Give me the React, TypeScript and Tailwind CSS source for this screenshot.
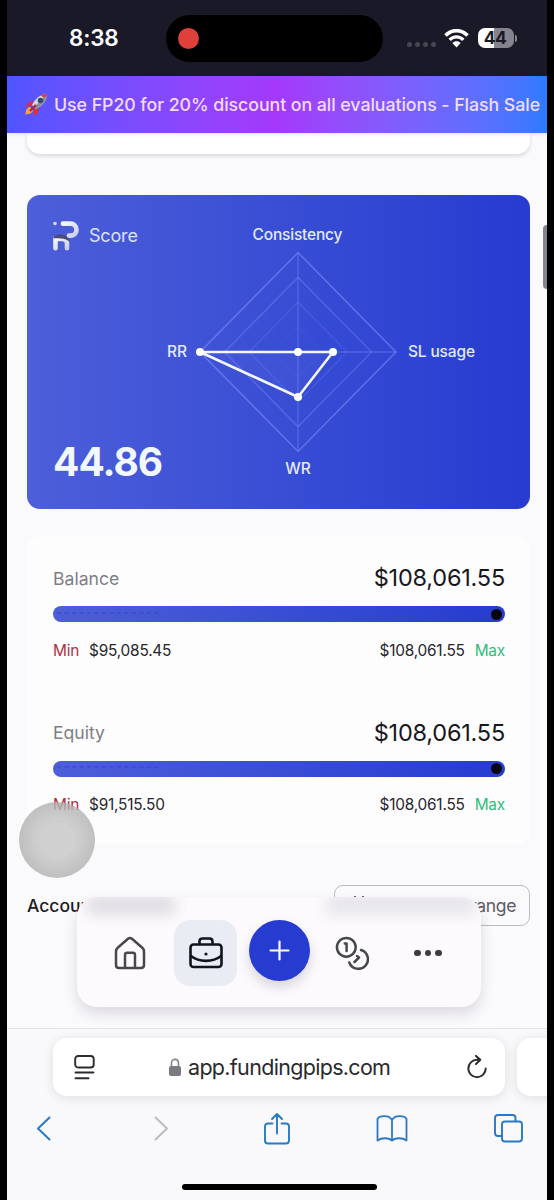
import React from 'react';

const ranges = [
  { label: 'Balance', value: '$108,061.55', min: '$95,085.45', max: '$108,061.55' },
  { label: 'Equity', value: '$108,061.55', min: '$91,515.50', max: '$108,061.55' },
];

const StatusBar = () => (
  <div className="flex h-[76px] shrink-0 items-center bg-[#1a1928]">
    <div className="w-[159px] pl-[62px] text-[22.500px] leading-none font-semibold tracking-[-0.01em] text-white">8:38</div>
    <div className="flex h-[47px] w-[217px] items-center rounded-full bg-black pl-[12px]">
      <div className="size-[21px] rounded-full bg-[#e0403a]" />
    </div>
    <div className="ml-[24px] flex gap-[3px] pt-[12px]">
      {[0, 1, 2, 3].map((i) => (
        <span key={i} className="size-[5px] rounded-full bg-[#474653]" />
      ))}
    </div>
    <svg className="ml-[8px]" width="25" height="19" viewBox="0 0 25 19" fill="none">
      <path d="M1.500 6.600C8-.1 17-.1 23.500 6.600" stroke="#fff" strokeWidth="3.600" />
      <path d="M5.700 10.900c3.800-4 9.800-4 13.600 0" stroke="#fff" strokeWidth="3.400" />
      <path d="M12.500 18.400 8.300 14c2.500-2.300 5.900-2.300 8.400 0z" fill="#fff" />
    </svg>
    <div className="ml-[9px] flex h-[20px] w-[36px] items-center justify-center rounded-[7px] bg-linear-to-r from-white from-45% to-[#85848d] to-45% pr-[2px] text-[17.500px] leading-none font-bold tracking-[-0.03em] text-[#1a1928]">
      44
    </div>
    <div className="ml-px h-[7px] w-[2px] rounded-r-full bg-[#85848d]" />
  </div>
);

const Rocket = () => (
  <svg className="shrink-0" width="23" height="23" viewBox="0 0 23 23">
    <path d="M9 8 4 9 0 14l6-1zM14 15l-1 5-5 3 1-7z" fill="#d8313c" />
    <path d="M5 14c-3 0-4.500 4-4.500 7.500C4 21 8 20 8 17z" fill="#f5a63b" />
    <path d="M22 1c-7 0-12 5-15 11l4 4c6-3 11-8 11-15z" fill="#d4d8de" />
    <path d="M22 1c-2 0-4 .4-6 1.300l4.600 4.600C21.700 5 22 3 22 1z" fill="#d33b46" />
    <path d="M11 16c6-3 11-8 11-14L9 14z" fill="#8b929e" />
    <circle cx="15.500" cy="7.500" r="2.800" fill="#344a73" />
    <path d="M5 18l6-6" stroke="#b32632" strokeWidth="2.400" />
  </svg>
);

const Logo = () => (
  <svg width="28" height="31" viewBox="0 0 28 31" fill="none">
    <defs>
      <linearGradient id="logo" x1="0" y1="0" x2="1" y2="1">
        <stop offset="0" stopColor="#f4f7ff" />
        <stop offset="1" stopColor="#cbd0f0" />
      </linearGradient>
    </defs>
    <circle cx="3" cy="3.500" r="1.800" fill="#d5dcff" />
    <path d="M11 3.700h7.500a6 6 0 0 1 0 12h-1.500" stroke="url(#logo)" strokeWidth="4.800" strokeLinecap="round" />
    <path d="M3.500 28.200V19H10c3.500 0 5 1.500 5 4.500v4.700" stroke="url(#logo)" strokeWidth="4.600" strokeLinecap="round" />
    <path d="M1 18.500c1-4 8-5 12-3 3 1.500 4.500 4 4.700 7-2-3-5-4-8.700-4-3 0-5.500-.5-8 0z" fill="#4b4a78" />
  </svg>
);

const CX = 271;
const CY = 157;

const diamond = (r: number) =>
  `${CX},${CY - r * 1.015} ${CX + r},${CY} ${CX},${CY + r * 1.015} ${CX - r},${CY}`;

const RadarChart = () => (
  <svg className="col-start-1 row-start-1" width="503" height="313" viewBox="0 0 503 313" fill="none">
    {[98, 73.5, 49, 24.5].map((r, i) => (
      <polygon key={r} points={diamond(r)} stroke="#8b98ff" strokeOpacity={[0.5, 0.32, 0.18, 0.05][i]} strokeWidth="1.500" />
    ))}
    <path d={`M${CX} 58V256M173 ${CY}H369`} stroke="#8b98ff" strokeOpacity="0.35" strokeWidth="1.300" />
    <polygon points="173,157 306,157 271,202" fill="#fff" fillOpacity="0.03" stroke="#f2f7ff" strokeWidth="2.600" strokeLinejoin="round" />
    {[[173, 157], [271, 157], [306, 157], [271, 202]].map(([x, y]) => (
      <circle key={`${x}-${y}`} cx={x} cy={y} r="4" fill="#fff" />
    ))}
    <g fill="#e3e9ff" fontFamily="Inter, sans-serif" fontSize="15.500" fontWeight="500">
      <text x="270.500" y="44.500" textAnchor="middle" textLength="90">Consistency</text>
      <text x="381" y="162" textLength="67">SL usage</text>
      <text x="271" y="279" textAnchor="middle">WR</text>
      <text x="160" y="162" textAnchor="end">RR</text>
    </g>
  </svg>
);

const ScoreCard = () => (
  <div className="mt-[41px] grid h-[314px] overflow-hidden rounded-[13px] bg-linear-to-r from-[#4d5ed9] to-[#263bd0]">
    <div className="col-start-1 row-start-1 flex flex-col justify-between px-[25px] pt-[25px] pb-[25px]">
      <div className="flex items-center gap-[9px] text-[18px] tracking-[-0.01em] text-[#dce2ff]">
        <Logo />
        <span>Score</span>
      </div>
      <div className="pl-px text-[39px] leading-[44px] font-bold tracking-[-0.025em] text-[#f1f8ff]">44.86</div>
    </div>
    <RadarChart />
  </div>
);

const RangeRow = ({ label, value, min, max }: (typeof ranges)[number]) => (
  <div className="h-[154.500px]">
    <div className="flex h-[30px] items-center justify-between">
      <span className="pt-[2px] text-[17.600px] text-[#7d7d85]">{label}</span>
      <span className="text-[23.500px] tracking-[-0.009em] text-[#17171c]">{value}</span>
    </div>
    <div className="mt-[13px] flex h-[16px] items-center justify-between rounded-full bg-linear-to-r from-[#4d5ed9] to-[#263bd0] pr-[3px]">
      <svg className="mb-[3px] ml-[4px]" width="104" height="2" viewBox="0 0 104 2">
        <path d="M0 1h104" stroke="#3541a8" strokeOpacity="0.75" strokeWidth="1.200" strokeDasharray="4 3.500" />
      </svg>
      <div className="size-[11px] rounded-full bg-[#05050f]" />
    </div>
    <div className="mt-[17.500px] flex h-[22px] items-center justify-between text-[15.400px] tracking-[-0.014em] text-[#26262c]">
      <span className="flex gap-[10px]">
        <span className="text-[#b02f43]">Min</span>
        {min}
      </span>
      <span className="flex gap-[10px]">
        {max}
        <span className="text-[#2fbd78]">Max</span>
      </span>
    </div>
  </div>
);

const HomeIcon = () => (
  <svg width="32" height="34" viewBox="0 0 32 34" fill="none" stroke="#47474c" strokeWidth="2.500" strokeLinejoin="round">
    <path d="M2 15.500c0-1.600.5-2.800 1.700-3.800L14 2.800c1.300-1.100 2.700-1.100 4 0l10.300 8.900c1.200 1 1.700 2.200 1.700 3.800V29c0 2-1 3-3 3H5c-2 0-3-1-3-3z" />
    <path d="M11 32V19c0-1.500.7-2.200 2.200-2.200h5.600c1.500 0 2.200.7 2.200 2.200v13" />
  </svg>
);

const BriefcaseIcon = () => (
  <svg width="34" height="32" viewBox="0 0 34 32" fill="none" stroke="#11131f" strokeWidth="2.600" strokeLinecap="round" strokeLinejoin="round">
    <rect x="1.500" y="7.500" width="31" height="22.500" rx="3" />
    <path d="M10.500 7V4.500c0-2 1-3 3-3h7c2 0 3 1 3 3V7M2 19c8 6.500 22 6.500 30 0" />
    <circle cx="17" cy="17" r="1.600" fill="#11131f" stroke="none" />
  </svg>
);

const CoinsIcon = () => (
  <svg width="34" height="34" viewBox="0 0 34 34" fill="none" stroke="#47474c" strokeWidth="2.500" strokeLinecap="round" strokeLinejoin="round">
    <circle cx="11.300" cy="11.300" r="9.400" />
    <path d="M9.800 7.500h1.800v7.500M26 14a9.600 9.600 0 1 1-11.700 12.500M22 20l2 1.500-4.500 4.500" />
  </svg>
);

const BottomNav = () => (
  <nav className="absolute top-[764px] left-[70px] flex h-[110px] w-[404px] items-center rounded-[20px] bg-[#fcfafd] pt-[2px] shadow-[0_7px_14px_rgba(40,35,60,0.14)]">
    <div className="absolute inset-0 overflow-hidden rounded-[20px]">
      <div className="absolute -top-[2px] left-[10px] h-[20px] w-[88px] bg-[#c3c1c7]/50 blur-[7px]" />
      <div className="absolute -top-[2px] left-[250px] h-[20px] w-[148px] bg-[#d2d0d6]/50 blur-[7px]" />
    </div>
    <button className="relative flex w-[97px] justify-center pl-[9px]">
      <HomeIcon />
    </button>
    <button className="relative flex h-[66px] w-[63px] items-center justify-center rounded-[16px] bg-[#e9edf3]">
      <BriefcaseIcon />
    </button>
    <button className="relative mb-[5px] ml-[12px] flex size-[61px] items-center justify-center rounded-full bg-[#263bd0] shadow-[0_6px_12px_rgba(50,45,80,0.18)]">
      <svg width="21" height="21" viewBox="0 0 21 21" stroke="#fff" strokeWidth="2.200" strokeLinecap="round">
        <path d="M10.500 1.500v18M1.500 10.500h18" />
      </svg>
    </button>
    <button className="relative ml-[25px]">
      <CoinsIcon />
    </button>
    <button className="relative ml-[45px] flex gap-[4px]">
      {[0, 1, 2].map((i) => (
        <span key={i} className="size-[6.500px] rounded-full bg-[#3b3b40]" />
      ))}
    </button>
  </nav>
);

const BrowserBar = () => (
  <div className="z-10 flex h-[172px] shrink-0 flex-col overflow-hidden border-t border-[#e2e1e6] bg-[#f9f8fb]">
    <div className="mt-[9px] flex h-[58px] gap-[12px] pl-[46px] text-[21.500px] text-[#29292d]">
      <div className="flex w-[452px] shrink-0 items-center rounded-[14px] bg-white px-[21px] shadow-[0_2px_12px_rgba(0,0,0,0.11)]">
        <svg width="21" height="26" viewBox="0 0 21 26" fill="none" stroke="#2b2b30" strokeWidth="1.900" strokeLinecap="round">
          <rect x="1.200" y="2" width="18.500" height="11.500" rx="3" />
          <path d="M1.500 18.500h18M1.500 24.300h13" />
        </svg>
        <svg className="ml-[74px]" width="12" height="19" viewBox="0 0 12 19" fill="none">
          <path d="M2.500 9V5.500c0-5.500 7-5.500 7 0V9" stroke="#85858a" strokeWidth="1.600" />
          <rect y="8" width="12" height="10" rx="2" fill="#7b7b80" />
        </svg>
        <span className="ml-[7px] pt-[2px] leading-none tracking-[-0.032em] whitespace-nowrap">app.fundingpips.com</span>
        <svg className="mr-[-3px] ml-auto" width="20" height="25" viewBox="0 0 20 25" fill="none" stroke="#2b2b30" strokeWidth="2" strokeLinecap="round" strokeLinejoin="round">
          <path d="M18.700 13.500a8.700 8.700 0 1 1-8.700-8.700h2.500M9 .9l4.300 3.900L9 9" />
        </svg>
      </div>
      <div className="w-[60px] shrink-0 rounded-[14px] bg-white shadow-[0_2px_12px_rgba(0,0,0,0.11)]" />
    </div>
    <div className="mt-[14px] flex h-[36px] items-center justify-between pr-[24px] pl-[29px] text-[#2b79c2]">
      <svg width="15" height="25" viewBox="0 0 15 25" fill="none" stroke="currentColor" strokeWidth="2" strokeLinecap="round" strokeLinejoin="round">
        <path d="M13.500 1.500 2 12.500l11.500 11" />
      </svg>
      <svg className="ml-[17px]" width="15" height="25" viewBox="0 0 15 25" fill="none" stroke="#bcbbc0" strokeWidth="2" strokeLinecap="round" strokeLinejoin="round">
        <path d="m1.500 1.500 11.500 11-11.500 11" />
      </svg>
      <svg className="ml-[8px]" width="26" height="33" viewBox="0 0 26 33" fill="none" stroke="currentColor" strokeWidth="1.900" strokeLinecap="round" strokeLinejoin="round">
        <path d="M8.500 11.500H4c-1.800 0-3 1-3 3v14c0 2 1.200 3 3 3h18c1.800 0 3-1 3-3v-14c0-2-1.200-3-3-3h-4.500M13 21.500V2M8 7l5-5 5 5" />
      </svg>
      <svg width="32" height="27" viewBox="0 0 32 27" fill="none" stroke="currentColor" strokeWidth="1.800" strokeLinejoin="round">
        <path d="M16 5v20.500M16 5C13-.3 3.500.5 1.500 4v21.500c4-3 11.500-3 14.500 0 3-3 10.500-3 14.500 0V4C28.500.5 19-.3 16 5z" />
      </svg>
      <svg width="29" height="29" viewBox="0 0 29 29" fill="none" stroke="currentColor" strokeWidth="1.900">
        <path d="M8 22H4c-2 0-3-1-3-3V4c0-2 1-3 3-3h14.500c2 0 3 1 3 3v3" />
        <rect x="8" y="7.500" width="20" height="20" rx="3" />
      </svg>
    </div>
    <div className="mt-[38px] ml-[175px] h-[6px] w-[195px] rounded-full bg-black" />
  </div>
);

const App = () => {
  return (
    <div className="h-[1200px] w-[554px] overflow-hidden bg-black px-[7px] font-['Inter',sans-serif]">
      <div className="flex h-full w-[540px] flex-col overflow-hidden bg-[#faf9fc]">
        <StatusBar />

        <div className="z-10 flex h-[57px] shrink-0 items-center gap-[6px] bg-linear-to-r from-[#4f55ff] via-[#a438fa] to-[#2b7bff] pl-[18px] text-[17.800px] font-medium tracking-[-0.004em] whitespace-nowrap text-[#f2dcff] shadow-[0_1px_4px_rgba(0,0,0,0.12)]">
          <Rocket />
          <span className="pt-px">Use FP20 for 20% discount on all evaluations - Flash Sale</span>
        </div>

        <main className="relative h-[895px] shrink-0 overflow-hidden pr-[17px] pl-[20px]">
          <div className="h-[21px] rounded-b-[13px] bg-white shadow-[0_2px_4px_rgba(0,0,0,0.14)]" />

          <ScoreCard />

          <div className="mt-[27px] h-[308px] rounded-[13px] bg-[#fefdfe] pt-[27px] pr-[25px] pl-[26px]">
            {ranges.map((range) => (
              <RangeRow key={range.label} {...range} />
            ))}
          </div>

          <div className="mt-[41px] flex h-[41px] items-center justify-between">
            <h2 className="pt-px text-[17.500px] font-medium text-[#1b1b20]">Account Balance</h2>
            <button className="flex h-[41px] w-[196px] items-center justify-between rounded-[9px] border border-[#bdbcc1] pr-[13px] pl-[15px] text-[17.500px] tracking-[-0.02em] whitespace-nowrap text-[#5c5c62]">
              <svg width="18" height="19" viewBox="0 0 18 19" fill="none" stroke="currentColor" strokeWidth="1.800">
                <path d="M1 2.500h16V18H1zM5 0v5M13 0v5M1 8h16" />
              </svg>
              <span className="pt-[2px]">Filter date range</span>
            </button>
          </div>

          <div className="absolute top-[669px] left-[12px] flex size-[76px] items-center justify-center rounded-full bg-radial from-[#c8c8c8]/90 from-40% to-[#a9a9a9]/75 to-75%">
            <div className="size-[37px] rounded-full bg-[#d2d2d2]/70" />
          </div>

          <div className="absolute top-[92px] right-0 h-[64px] w-[4px] rounded-l-full bg-[#85848b]" />

          <BottomNav />
        </main>

        <BrowserBar />
      </div>
    </div>
  );
};

export default App;
